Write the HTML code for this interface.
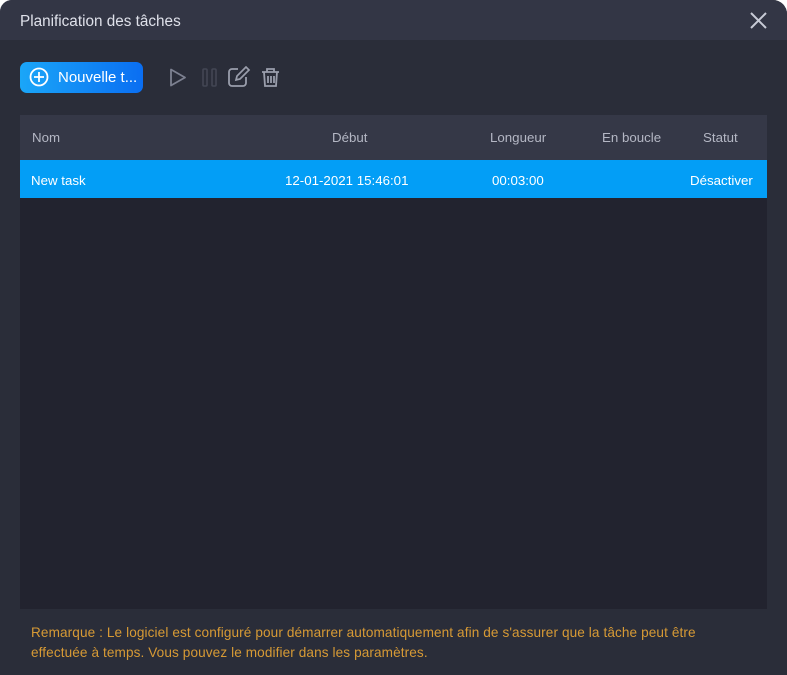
<!DOCTYPE html>
<html><head><meta charset="utf-8"><style>
*{margin:0;padding:0;box-sizing:border-box}
body{width:787px;height:675px;background:#fff;font-family:"Liberation Sans",sans-serif;overflow:hidden;position:relative}
.win{position:absolute;left:0;top:0;width:787px;height:675px;background:#2a2d39;border-radius:12px 14px 0 0;overflow:hidden}
.title{position:absolute;left:0;top:0;width:787px;height:40px;background:#333645;color:#dfe1ea;font-size:15.3px;line-height:44px;padding-left:20px}
.x{position:absolute;right:20px;top:12px}
.btn{position:absolute;left:20px;top:62px;width:123px;height:31px;border-radius:7px;background:linear-gradient(90deg,#1aa6f8,#0a6ef2);color:#fff;font-size:15px;line-height:32px;padding-left:38px}
.tbl{position:absolute;left:20px;top:115px;width:747px;height:494px;background:#22232f}
.hd{height:45px;background:#353847;color:#b4b7c4;font-size:13.3px;position:relative}
.row{height:38px;background:#039ef6;color:#fff;font-size:13.3px;position:relative}
.hd span,.row span{position:absolute;top:0;line-height:46px}
.row span{line-height:41px}
.note{position:absolute;left:31px;top:623px;color:#d79a35;font-size:13.6px;line-height:20px;letter-spacing:0.1px}
</style></head><body>
<div class="win">
<div class="title">Planification des tâches
<svg class="x" width="17" height="17" viewBox="0 0 17 17"><path d="M1 1L16 16M16 1L1 16" stroke="#c8cbd6" stroke-width="2"/></svg></div>
<div class="btn"><svg style="position:absolute;left:9px;top:5px" width="20" height="20" viewBox="0 0 20 20"><circle cx="10" cy="10" r="8.5" fill="none" stroke="#fff" stroke-width="1.8"/><path d="M10 5v10M5 10h10" stroke="#fff" stroke-width="1.8"/></svg>Nouvelle t...</div>
<svg style="position:absolute;left:168px;top:66px" width="120" height="24" viewBox="0 0 120 24">
<path d="M3 3.5L17 11.5 3 19.5Z" fill="none" stroke="#7c8090" stroke-width="1.8" stroke-linejoin="round"/>
<rect x="35" y="3" width="4" height="17" rx="1" fill="none" stroke="#434654" stroke-width="1.6"/>
<rect x="44" y="3" width="4" height="17" rx="1" fill="none" stroke="#434654" stroke-width="1.6"/>
<path d="M70 3H64a3 3 0 0 0-3 3v11a3 3 0 0 0 3 3h11a3 3 0 0 0 3-3v-6" fill="none" stroke="#9a9eac" stroke-width="1.8"/>
<path d="M68 14l1-4 9-9 3 3-9 9z" fill="none" stroke="#9a9eac" stroke-width="1.7"/>
<path d="M94 6h17M99 6V3h7v3M96 6l1 14h11l1-14M100 10v7M103 10v7M106 10v7" fill="none" stroke="#9a9eac" stroke-width="1.8"/>
</svg>
<div class="tbl">
<div class="hd"><span style="left:12px">Nom</span><span style="left:312px">Début</span><span style="left:470px">Longueur</span><span style="left:582px">En boucle</span><span style="left:683px">Statut</span></div>
<div class="row"><span style="left:11px">New task</span><span style="left:265px">12-01-2021 15:46:01</span><span style="left:472px">00:03:00</span><span style="left:670px">Désactiver</span></div>
</div>
<div class="note">Remarque : Le logiciel est configuré pour démarrer automatiquement afin de s'assurer que la tâche peut être<br>effectuée à temps. Vous pouvez le modifier dans les paramètres.</div>
</div>
</body></html>
